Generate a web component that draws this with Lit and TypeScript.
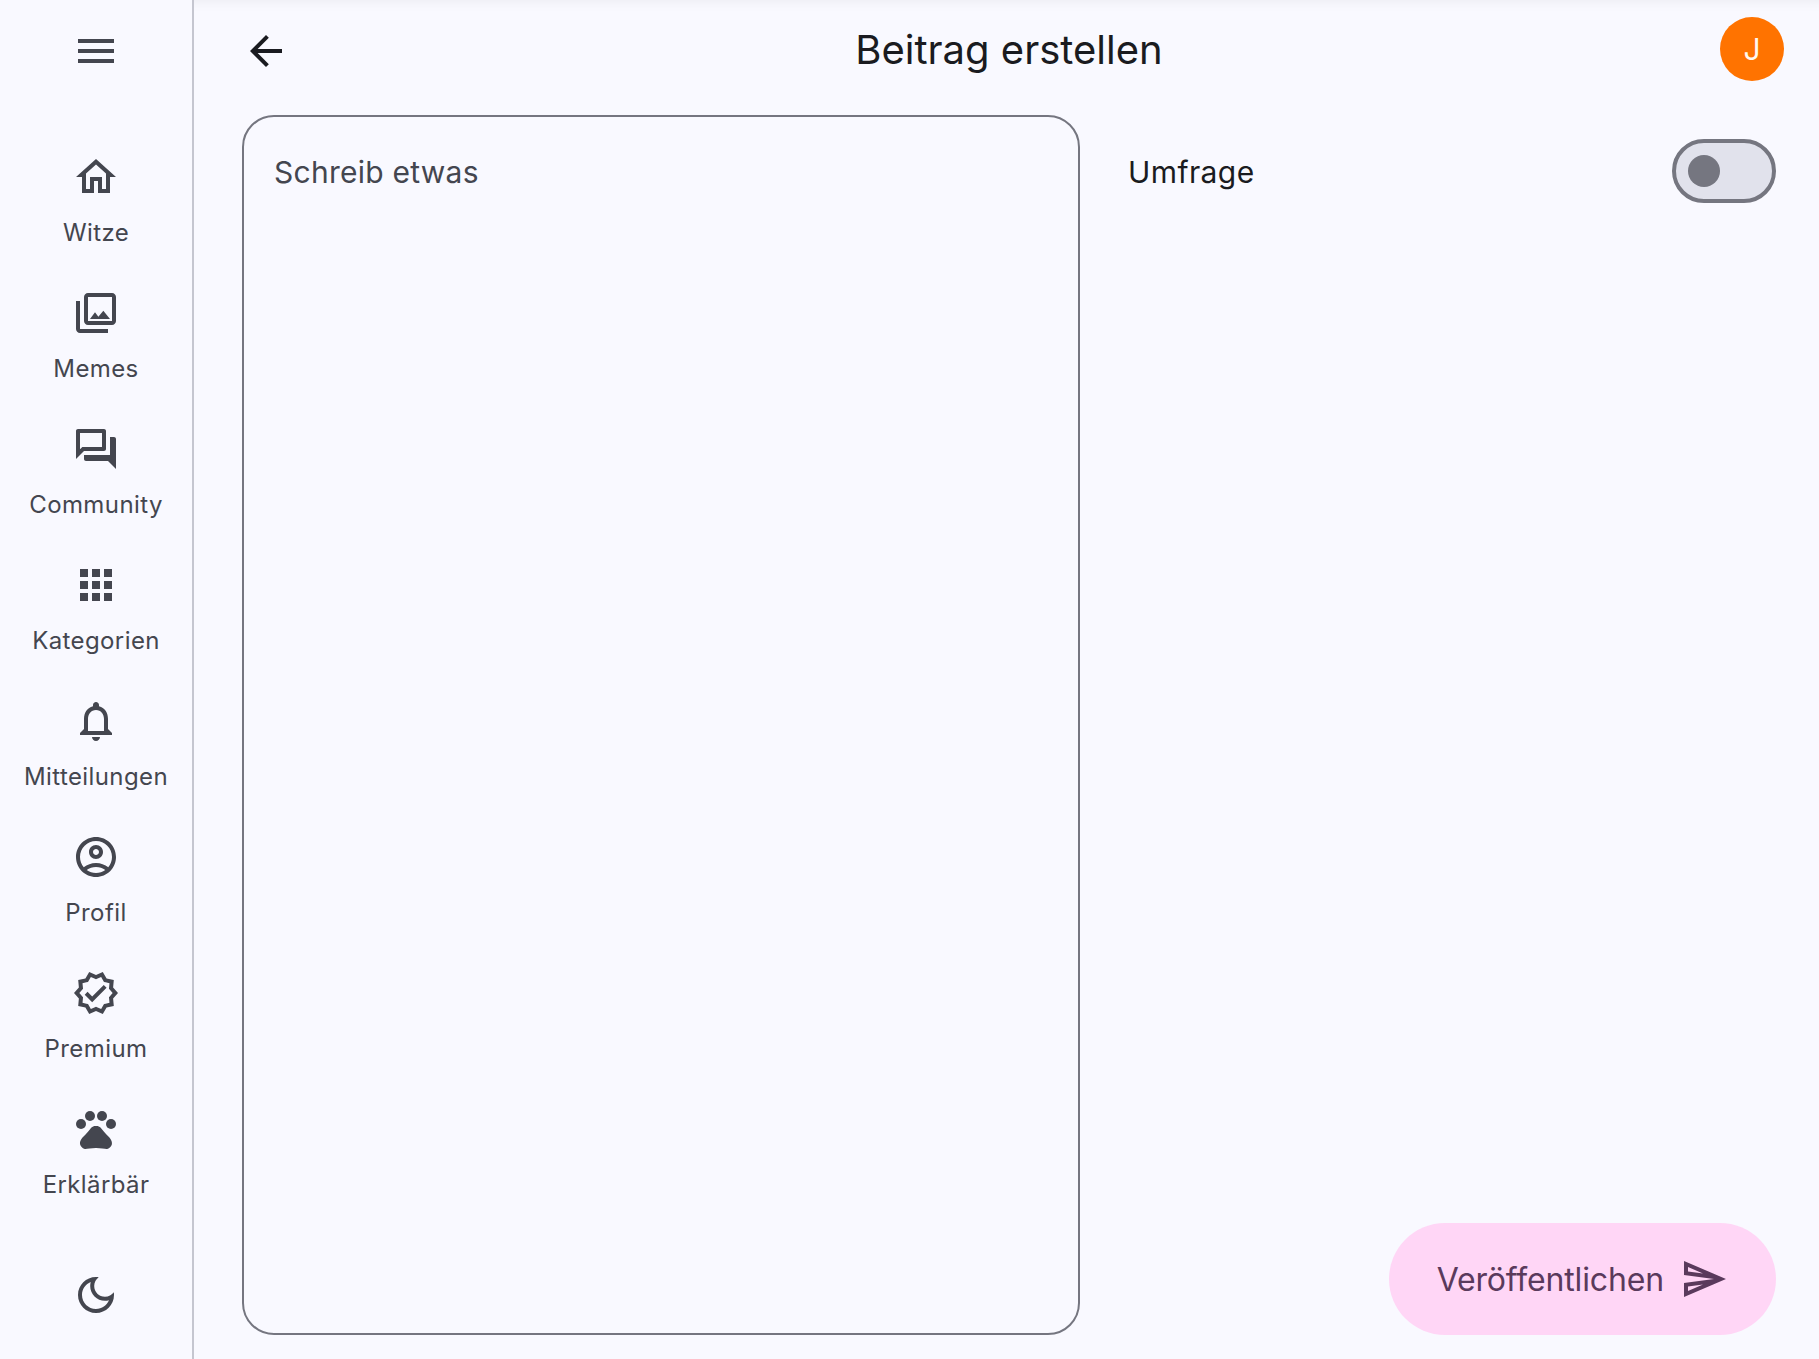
import { LitElement, html, css, svg } from "lit";
import { customElement } from "lit/decorators.js";

const ICONS: Record<string, unknown> = {
  menu: svg`<path d="M3 18h18v-2H3v2zm0-5h18v-2H3v2zm0-7v2h18V6H3z"/>`,
  home: svg`<path d="M12 5.69l5 4.5V18h-2v-6H9v6H7v-7.81l5-4.5M12 3L2 12h3v8h6v-6h2v6h6v-8h3L12 3z"/>`,
  photo: svg`<path d="M20 4v12H8V4h12m0-2H8c-1.1 0-2 .9-2 2v12c0 1.1.9 2 2 2h12c1.1 0 2-.9 2-2V4c0-1.1-.9-2-2-2zm-8.5 9.67l1.69 2.26 2.48-3.1L19 15H9zM2 6v14c0 1.1.9 2 2 2h14v-2H4V6H2z"/>`,
  forum: svg`<path d="M15 4v7H5.17L4 12.17V4h11m1-2H3c-.55 0-1 .45-1 1v14l4-4h10c.55 0 1-.45 1-1V3c0-.55-.45-1-1-1zm5 4h-2v9H6v2c0 .55.45 1 1 1h11l4 4V7c0-.55-.45-1-1-1z"/>`,
  apps: svg`<path d="M4 8h4V4H4v4zm6 12h4v-4h-4v4zm-6 0h4v-4H4v4zm0-6h4v-4H4v4zm6 0h4v-4h-4v4zm6-10v4h4V4h-4zm-6 4h4V4h-4v4zm6 6h4v-4h-4v4zm0 6h4v-4h-4v4z"/>`,
  bell: svg`<path d="M12 22c1.1 0 2-.9 2-2h-4c0 1.1.9 2 2 2zm6-6v-5c0-3.07-1.63-5.64-4.5-6.32V4c0-.83-.67-1.5-1.5-1.5s-1.5.67-1.5 1.5v.68C7.64 5.36 6 7.92 6 11v5l-2 2v1h16v-1l-2-2zm-2 1H8v-6c0-2.48 1.51-4.5 4-4.5s4 2.02 4 4.5v6z"/>`,
  account: svg`<path d="M12 2C6.48 2 2 6.48 2 12s4.48 10 10 10 10-4.48 10-10S17.52 2 12 2zM7.35 18.5C8.66 17.56 10.26 17 12 17s3.34.56 4.65 1.5c-1.31.94-2.91 1.5-4.65 1.5s-3.34-.56-4.65-1.5zm10.79-1.38C16.45 15.8 14.32 15 12 15s-4.45.8-6.14 2.12C4.7 15.73 4 13.95 4 12c0-4.42 3.58-8 8-8s8 3.58 8 8c0 1.95-.7 3.73-1.86 5.12z"/><path d="M12 6c-1.93 0-3.5 1.57-3.5 3.5S10.07 13 12 13s3.5-1.57 3.5-3.5S13.93 6 12 6zm0 5c-.83 0-1.5-.67-1.5-1.5S11.17 8 12 8s1.5.67 1.5 1.5S12.83 11 12 11z"/>`,
  verified: svg`<path d="m23 11.99-2.44-2.79.34-3.69-3.61-.82-1.89-3.2L12 2.96 8.6 1.5 6.71 4.69 3.1 5.5l.34 3.7L1 11.99l2.44 2.79-.34 3.7 3.61.82 1.89 3.2 3.4-1.47 3.4 1.46 1.89-3.19 3.61-.82-.34-3.69L23 11.99zm-3.95 1.48-.56.65.08.85.18 1.95-1.9.43-.84.19-.44.74-.99 1.68-1.78-.77-.8-.34-.79.34-1.78.77-.99-1.67-.44-.74-.84-.19-1.9-.43.18-1.96.08-.85-.56-.65L3.67 12l1.29-1.48.56-.65-.09-.86-.18-1.94 1.9-.43.84-.19.44-.74.99-1.68 1.78.77.8.34.79-.34 1.78-.77.99 1.68.44.74.84.19 1.9.43-.18 1.95-.08.85.56.65 1.29 1.47-1.28 1.48z"/><path d="M10.09 13.75l-2.32-2.33-1.41 1.42 3.73 3.75 7.2-7.23-1.41-1.42z"/>`,
  pets: svg`<circle cx="4.5" cy="9.5" r="2.5"/><circle cx="9" cy="5.5" r="2.5"/><circle cx="15" cy="5.5" r="2.5"/><circle cx="19.5" cy="9.5" r="2.5"/><path d="M17.34 14.86c-.87-1.02-1.6-1.89-2.48-2.91-.46-.54-1.05-1.08-1.75-1.32-.11-.04-.22-.07-.33-.09-.25-.04-.52-.04-.78-.04s-.53 0-.79.05c-.11.02-.22.05-.33.09-.7.24-1.28.78-1.75 1.32-.87 1.02-1.6 1.89-2.48 2.91-1.31 1.31-2.92 2.76-2.62 4.79.29 1.02 1.02 2.03 2.33 2.32.73.15 3.06-.44 5.54-.44h.18c2.48 0 4.81.58 5.54.44 1.31-.29 2.04-1.31 2.33-2.32.31-2.04-1.3-3.49-2.61-4.8z"/>`,
  moon: svg`<path d="M9.37 5.51C9.19 6.15 9.1 6.82 9.1 7.5c0 4.08 3.32 7.4 7.4 7.4.68 0 1.35-.09 1.99-.27C17.45 17.19 14.93 19 12 19c-3.86 0-7-3.14-7-7 0-2.93 1.81-5.45 4.37-6.49zM12 3c-4.97 0-9 4.03-9 9s4.03 9 9 9 9-4.03 9-9c0-.46-.04-.92-.1-1.36-.98 1.37-2.58 2.26-4.4 2.26-2.98 0-5.4-2.42-5.4-5.4 0-1.81.89-3.42 2.26-4.4-.44-.06-.9-.1-1.36-.1z"/>`,
  back: svg`<path d="M20 11H7.83l5.59-5.59L12 4l-8 8 8 8 1.41-1.41L7.83 13H20v-2z"/>`,
  send: svg`<path d="M4.01 6.03l7.51 3.22-7.52-1 .01-2.22m7.5 8.72L4 17.97v-2.22l7.51-1M2.01 3L2 10l15 2-15 2 .01 7L23 12 2.01 3z"/>`,
};

const icon = (name: string) =>
  html`<svg class="icon" viewBox="0 0 24 24" fill="currentColor" aria-hidden="true">${ICONS[name]}</svg>`;

const NAV: [string, string][] = [
  ["home", "Witze"],
  ["photo", "Memes"],
  ["forum", "Community"],
  ["apps", "Kategorien"],
  ["bell", "Mitteilungen"],
  ["account", "Profil"],
  ["verified", "Premium"],
  ["pets", "Erklärbär"],
];

@customElement("app-root")
export class AppRoot extends LitElement {
  static styles = css`
    :host {
      display: flex;
      width: 100%;
      height: 1359px;
      overflow: hidden;
      background: #f9f9ff;
      font-family: Inter, "Liberation Sans", sans-serif;
      color: #1a1b20;
    }
    .icon {
      display: block;
      width: 48px;
      height: 48px;
      flex: none;
    }
    .rail {
      box-sizing: border-box;
      width: 194px;
      flex: none;
      border-right: 2px solid #c5c6d0;
      display: flex;
      flex-direction: column;
      align-items: center;
      color: #44464f;
      padding: 27px 0 40px;
    }
    .nav {
      display: flex;
      flex-direction: column;
      align-items: center;
      margin-top: 78px;
      flex: 1;
    }
    .item {
      display: flex;
      flex-direction: column;
      align-items: center;
      height: 136px;
    }
    .label {
      margin-top: 16px;
      font-size: 24px;
      line-height: 32px;
      letter-spacing: 0.4px;
      font-weight: 400;
      white-space: nowrap;
    }
    .main {
      flex: 1;
      min-width: 0;
      display: flex;
      flex-direction: column;
    }
    .bar {
      height: 102px;
      flex: none;
      display: flex;
      align-items: center;
      padding: 0 35px 0 48px;
      box-shadow: inset 0 14px 14px -14px rgba(0, 0, 0, 0.07);
    }
    .title {
      flex: 1;
      text-align: center;
      font-size: 40px;
      line-height: 56px;
      font-weight: 400;
      padding: 0 0 2px 8px;
    }
    .avatar {
      width: 64px;
      height: 64px;
      margin-bottom: 4px;
      border-radius: 50%;
      background: #ff7300;
      color: #fff8ee;
      font-size: 30px;
      font-weight: 400;
      display: flex;
      align-items: center;
      justify-content: center;
      flex: none;
    }
    .content {
      flex: 1;
      min-height: 0;
      display: flex;
      gap: 48px;
      padding: 13px 43px 24px 48px;
    }
    .field {
      box-sizing: border-box;
      width: 838px;
      flex: none;
      border: 2px solid #757680;
      border-radius: 32px;
      padding: 31px 30px;
      font-size: 30px;
      line-height: 48px;
      letter-spacing: 0.25px;
      color: #44464f;
    }
    .side {
      flex: 1;
      min-width: 0;
      display: flex;
      flex-direction: column;
      justify-content: space-between;
      align-items: stretch;
    }
    .row {
      display: flex;
      align-items: center;
      justify-content: space-between;
      height: 64px;
      margin-top: 24px;
      font-size: 30px;
      line-height: 48px;
      letter-spacing: 0.4px;
    }
    .row span {
      padding-top: 1px;
    }
    .switch {
      box-sizing: border-box;
      width: 104px;
      height: 64px;
      border: 4px solid #757680;
      border-radius: 32px;
      background: #e1e2ec;
      display: flex;
      align-items: center;
      padding-left: 12px;
    }
    .knob {
      width: 32px;
      height: 32px;
      border-radius: 50%;
      background: #757680;
    }
    .fab {
      align-self: flex-end;
      height: 112px;
      box-sizing: border-box;
      border-radius: 56px;
      background: #ffd6f6;
      color: #5a3a5c;
      display: flex;
      align-items: center;
      gap: 16px;
      padding: 0 48px;
      font-size: 32px;
      line-height: 48px;
      letter-spacing: -0.15px;
    }
    .fab span {
      padding-top: 2px;
    }
  `;

  render() {
    return html`
      <aside class="rail">
        ${icon("menu")}
        <nav class="nav">
          ${NAV.map(
            ([i, l]) => html`<div class="item">${icon(i)}<span class="label">${l}</span></div>`
          )}
        </nav>
        ${icon("moon")}
      </aside>
      <div class="main">
        <header class="bar">
          ${icon("back")}
          <div class="title">Beitrag erstellen</div>
          <div class="avatar">J</div>
        </header>
        <section class="content">
          <div class="field">Schreib etwas</div>
          <div class="side">
            <div class="row">
              <span>Umfrage</span>
              <div class="switch"><div class="knob"></div></div>
            </div>
            <div class="fab"><span>Veröffentlichen</span>${icon("send")}</div>
          </div>
        </section>
      </div>
    `;
  }
}
